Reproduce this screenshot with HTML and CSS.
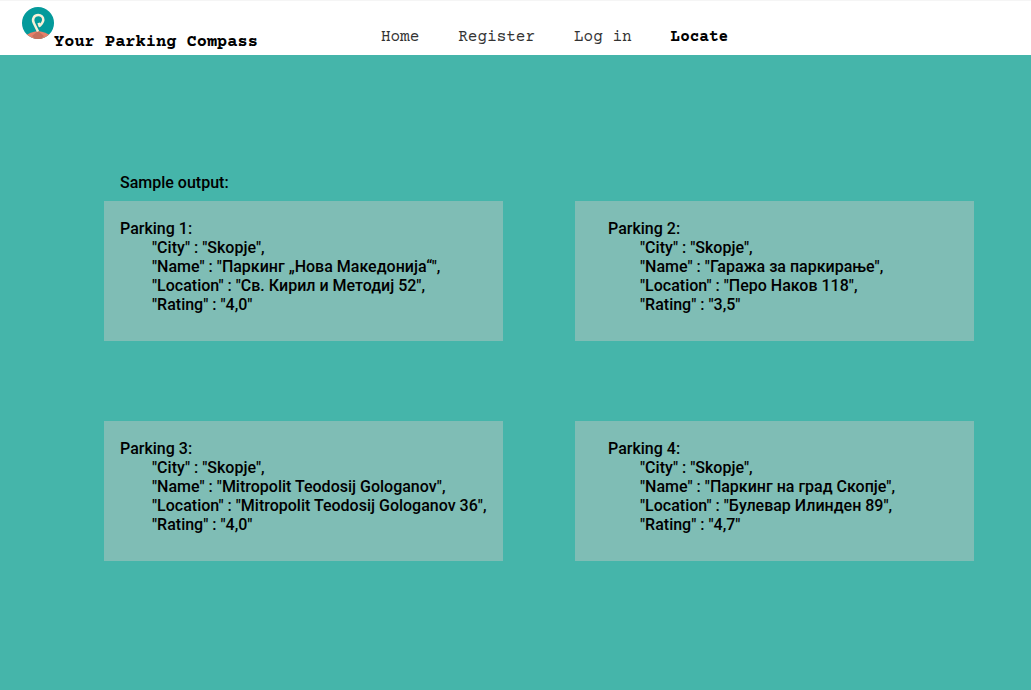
FILE: index.html
```html
<!DOCTYPE html>
<html lang="en">
<head>
<meta charset="utf-8">
<meta name="viewport" content="width=device-width, initial-scale=1">
<title>Your Parking Compass</title>
<link rel="stylesheet" href="styles.css">
</head>
<body>
<header class="header">
  <a class="brand" href="#">
    <svg class="logo" viewBox="0 0 32 32" aria-hidden="true">
      <defs><clipPath id="disc"><circle cx="16" cy="16" r="16"/></clipPath></defs>
      <g clip-path="url(#disc)">
        <rect width="32" height="32" fill="#049a9b"/>
        <path d="M3 29 Q8 25 16 24 Q24 25 29 29 V32 H3Z" fill="#e8806a"/>
        <path d="M16 24 L22 29 L19 32 H13 L10 29Z" fill="#c4705c"/>
      </g>
      <path d="M16 24.500 L11.800 16 C10.800 14 10.800 12 11.800 10.300 C12.800 8.700 14.400 8 16.200 8 C19.300 8 21.300 10.200 21.300 12.900 C21.300 15.200 19.600 16.800 17.600 19 L16.600 15.800" fill="none" stroke="#f8f0d8" stroke-width="2.500" stroke-linejoin="round"/>
    </svg>
    <span class="brand-name">Your Parking Compass</span>
  </a>
  <nav class="nav">
    <a class="nav-link" href="#">Home</a>
    <a class="nav-link" href="#">Register</a>
    <a class="nav-link" href="#">Log in</a>
    <a class="nav-link nav-link-active" href="#" aria-current="page">Locate</a>
  </nav>
</header>
<main class="main">
  <h1 class="heading">Sample output:</h1>
  <div class="results">
    <section class="card">
      <h2 class="card-title">Parking 1:</h2>
      <ul class="fields">
        <li>"City" : "Skopje",</li>
        <li>"Name" : "Паркинг „Нова Македонија“",</li>
        <li>"Location" : "Св. Кирил и Методиј 52",</li>
        <li>"Rating" : "4,0"</li>
      </ul>
    </section>
    <section class="card card-inset">
      <h2 class="card-title">Parking 2:</h2>
      <ul class="fields">
        <li>"City" : "Skopje",</li>
        <li>"Name" : "Гаража за паркирање",</li>
        <li>"Location" : "Перо Наков 118",</li>
        <li>"Rating" : "3,5"</li>
      </ul>
    </section>
    <section class="card">
      <h2 class="card-title">Parking 3:</h2>
      <ul class="fields">
        <li>"City" : "Skopje",</li>
        <li>"Name" : "Mitropolit Teodosij Gologanov",</li>
        <li>"Location" : "Mitropolit Teodosij Gologanov 36",</li>
        <li>"Rating" : "4,0"</li>
      </ul>
    </section>
    <section class="card card-inset">
      <h2 class="card-title">Parking 4:</h2>
      <ul class="fields">
        <li>"City" : "Skopje",</li>
        <li>"Name" : "Паркинг на град Скопје",</li>
        <li>"Location" : "Булевар Илинден 89",</li>
        <li>"Rating" : "4,7"</li>
      </ul>
    </section>
  </div>
</main>
</body>
</html>
```
FILE: styles.css
```css
* {
  box-sizing: border-box;
}

body {
  display: flex;
  flex-direction: column;
  min-height: 100vh;
  margin: 0;
  background: #45b5aa;
  color: #000;
  font: 500 16px/19px Roboto, sans-serif;
}

.header {
  display: flex;
  align-items: flex-start;
  gap: 123px;
  padding: 6px 22px 2px;
  border-top: 1px solid #f5f5f5;
  background: #fff;
  font-family: "Courier Prime", "Liberation Mono", monospace;
}

.brand {
  display: flex;
  color: #000;
  text-decoration: none;
}

.logo {
  width: 32px;
  height: 32px;
}

.brand-name {
  padding-top: 26px;
  font-size: 17px;
  line-height: 20px;
  font-weight: 700;
  white-space: nowrap;
}

.nav {
  display: flex;
  gap: 39px;
  padding-top: 20px;
}

.nav-link {
  color: #333;
  font-size: 16px;
  line-height: 20px;
  font-weight: 400;
  text-decoration: none;
  white-space: nowrap;
}

.nav-link-active {
  color: #000;
  font-weight: 700;
}

.main {
  padding: 118px 57px 80px 104px;
}

.heading {
  margin: 0 0 9px;
  padding-left: 16px;
  font-size: 16px;
  line-height: 19px;
  font-weight: 500;
}

.results {
  display: grid;
  grid-template-columns: 1fr 1fr;
  gap: 80px 72px;
}

.card {
  padding: 18px 12px 27px 16px;
  background: #7fbdb5;
}

.card-inset {
  padding-left: 33px;
}

.card-title {
  margin: 0;
  font-size: 16px;
  line-height: 19px;
  font-weight: 500;
}

.fields {
  margin: 0;
  padding: 0 0 0 32px;
  list-style: none;
}
```
